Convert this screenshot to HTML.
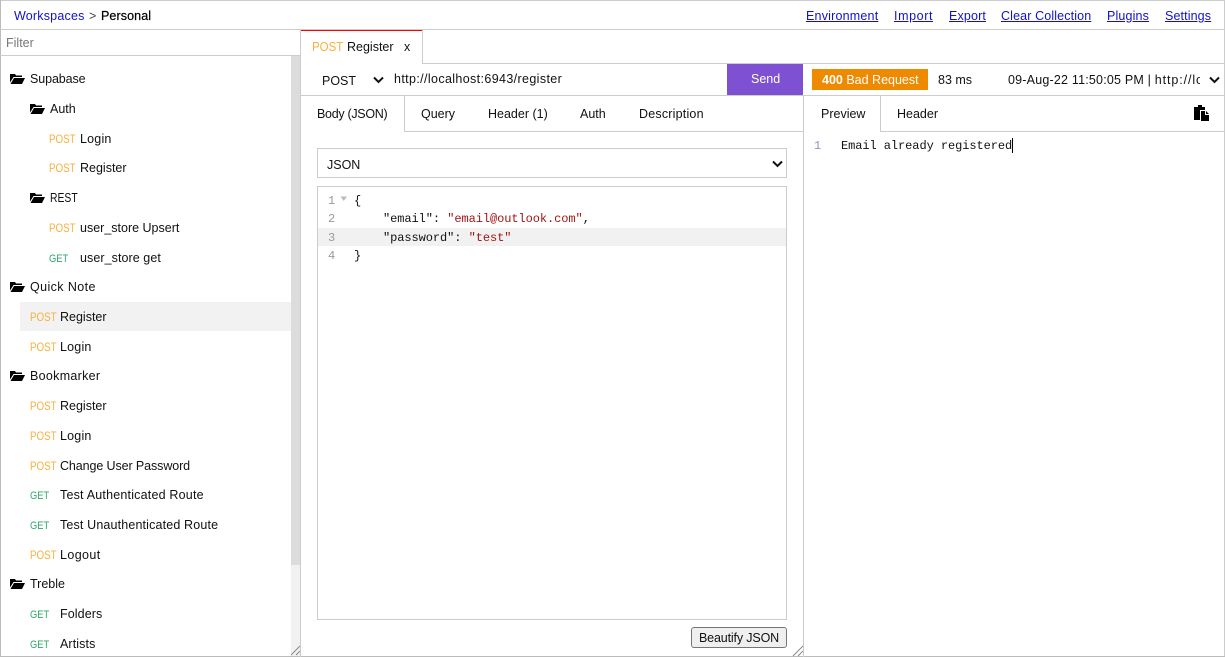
<!DOCTYPE html>
<html>
<head>
<meta charset="utf-8">
<style>
html,body{margin:0;padding:0;background:#fff}
body{width:1225px;height:657px;position:relative;overflow:hidden;font-family:"Liberation Sans",sans-serif;font-size:12.5px;color:#111}
.t,.m,.l{position:absolute;white-space:nowrap;line-height:16px;height:16px}
.m{font-family:"Liberation Mono",monospace;font-size:12px;line-height:18px;height:18px;letter-spacing:-.07px}
.l{color:#11c;text-decoration:underline;top:8px}
.r{position:absolute}
.p,.g{display:inline-block;transform-origin:0 50%}
.p{color:#fbaf3c;font-size:11.5px;transform:scaleX(.85)}
.g{color:#2fa96b;font-size:11px;transform:scaleX(.85)}
.n{color:#999}
.s{color:#a31515}
svg{position:absolute}
</style>
</head>
<body>
<!-- frame -->
<div class="r" style="left:0;top:0;width:1225px;height:1px;background:#ccc"></div>
<div class="r" style="left:0;top:0;width:1px;height:657px;background:#bbb"></div>
<div class="r" style="left:1224px;top:0;width:1px;height:657px;background:#ccc"></div>
<div class="r" style="left:0;top:656px;width:1225px;height:1px;background:#bbb"></div>
<div class="r" style="left:0;top:29px;width:1225px;height:1px;background:#ccc"></div>
<div class="r" style="left:0;top:55px;width:300px;height:1px;background:#ccc"></div>
<div class="r" style="left:300px;top:30px;width:1px;height:627px;background:#ccc"></div>
<div class="r" style="left:301px;top:63px;width:924px;height:1px;background:#ccc"></div>
<div class="r" style="left:301px;top:95px;width:924px;height:1px;background:#ccc"></div>
<div class="r" style="left:803px;top:96px;width:1px;height:561px;background:#ccc"></div>

<!-- top bar -->
<div class="t" style="left:14px;top:8px;color:#11c;letter-spacing:.2px">Workspaces</div>
<div class="t" style="left:89px;top:8px;color:#444">&gt;</div>
<div class="t" style="left:101px;top:8px;color:#000;letter-spacing:.1px;-webkit-text-stroke:.2px #000">Personal</div>
<a class="l" style="left:806px;letter-spacing:.2px">Environment</a>
<a class="l" style="left:894px;letter-spacing:.6px">Import</a>
<a class="l" style="left:949px;letter-spacing:.15px">Export</a>
<a class="l" style="left:1001px;letter-spacing:.13px">Clear Collection</a>
<a class="l" style="left:1107px;letter-spacing:.15px">Plugins</a>
<a class="l" style="left:1165px;letter-spacing:.12px">Settings</a>

<!-- filter -->
<div class="t" style="left:6px;top:35px;color:#777">Filter</div>

<!-- sidebar -->
<div class="r" style="left:291px;top:56px;width:9px;height:600px;background:#f1f1f1"></div>
<div class="r" style="left:291px;top:56px;width:9px;height:509px;background:#dcdcdc"></div>
<div class="r" style="left:20px;top:302px;width:271px;height:29px;background:#f2f2f2"></div>

<svg style="left:0;top:0" width="300" height="657">
<defs><path id="f" d="M0 1h5l1 1.5h6v1.5H3.500L0 9.500z M4 5h11l-3 6H0.500z" fill="#000"/></defs>
<use href="#f" x="10" y="73"/>
<use href="#f" x="30" y="103"/>
<use href="#f" x="30" y="192"/>
<use href="#f" x="10" y="281"/>
<use href="#f" x="10" y="370"/>
<use href="#f" x="10" y="578"/>
<g stroke="#888" stroke-width="1"><path d="M291 655l9-9M296 655l4-4"/></g>
</svg>

<div class="t" style="left:30px;top:71px;letter-spacing:-.1px">Supabase</div>
<div class="t" style="left:50px;top:101px">Auth</div>
<div class="t" style="left:49px;top:131px"><span class="p">POST</span></div><div class="t" style="left:80px;top:131px;letter-spacing:.2px">Login</div>
<div class="t" style="left:49px;top:160px"><span class="p">POST</span></div><div class="t" style="left:80px;top:160px">Register</div>
<div class="t" style="left:50px;top:190px;transform:scaleX(.83);transform-origin:0 50%">REST</div>
<div class="t" style="left:49px;top:220px"><span class="p">POST</span></div><div class="t" style="left:80px;top:220px">user_store Upsert</div>
<div class="t" style="left:49px;top:250px"><span class="g">GET</span></div><div class="t" style="left:80px;top:250px;letter-spacing:.07px">user_store get</div>
<div class="t" style="left:30px;top:279px;letter-spacing:.4px">Quick Note</div>
<div class="t" style="left:30px;top:309px"><span class="p">POST</span></div><div class="t" style="left:60px;top:309px">Register</div>
<div class="t" style="left:30px;top:339px"><span class="p">POST</span></div><div class="t" style="left:60px;top:339px;letter-spacing:.2px">Login</div>
<div class="t" style="left:30px;top:368px;letter-spacing:.3px">Bookmarker</div>
<div class="t" style="left:30px;top:398px"><span class="p">POST</span></div><div class="t" style="left:60px;top:398px">Register</div>
<div class="t" style="left:30px;top:428px"><span class="p">POST</span></div><div class="t" style="left:60px;top:428px;letter-spacing:.2px">Login</div>
<div class="t" style="left:30px;top:458px"><span class="p">POST</span></div><div class="t" style="left:60px;top:458px;letter-spacing:-.1px">Change User Password</div>
<div class="t" style="left:30px;top:487px"><span class="g">GET</span></div><div class="t" style="left:60px;top:487px;letter-spacing:.2px">Test Authenticated Route</div>
<div class="t" style="left:30px;top:517px"><span class="g">GET</span></div><div class="t" style="left:60px;top:517px;letter-spacing:.15px">Test Unauthenticated Route</div>
<div class="t" style="left:30px;top:547px"><span class="p">POST</span></div><div class="t" style="left:60px;top:547px;letter-spacing:.4px">Logout</div>
<div class="t" style="left:30px;top:576px">Treble</div>
<div class="t" style="left:30px;top:606px"><span class="g">GET</span></div><div class="t" style="left:60px;top:606px;letter-spacing:.1px">Folders</div>
<div class="t" style="left:30px;top:636px"><span class="g">GET</span></div><div class="t" style="left:60px;top:636px;letter-spacing:.1px">Artists</div>

<!-- request tab -->
<div class="r" style="left:301px;top:30px;width:121px;height:34px;background:#fff;border-top:1px solid #f00;box-sizing:border-box"></div>
<div class="r" style="left:422px;top:30px;width:1px;height:33px;background:#ccc"></div>
<div class="t" style="left:312px;top:39px;color:#fbaf3c;transform:scaleX(.92);transform-origin:0 50%">POST</div>
<div class="t" style="left:347px;top:39px">Register</div>
<div class="t" style="left:404px;top:39px">x</div>

<!-- url row -->
<div class="t" style="left:322px;top:73px">POST</div>
<svg style="left:373px;top:76px" width="11" height="8"><path d="M1 1.500l4.500 4.500L10 1.500" fill="none" stroke="#111" stroke-width="2"/></svg>
<div class="t" style="left:394px;top:71px;letter-spacing:.37px">http://localhost:6943/register</div>
<div class="r" style="left:727px;top:64px;width:76px;height:31px;background:#7e50d2"></div>
<div class="t" style="left:751px;top:71px;color:#fff">Send</div>

<!-- body tabs -->
<div class="r" style="left:404px;top:96px;width:1px;height:36px;background:#ccc"></div>
<div class="r" style="left:405px;top:131px;width:398px;height:1px;background:#ccc"></div>
<div class="t" style="left:317px;top:106px;letter-spacing:-.3px">Body (JSON)</div>
<div class="t" style="left:421px;top:106px">Query</div>
<div class="t" style="left:488px;top:106px">Header (1)</div>
<div class="t" style="left:580px;top:106px">Auth</div>
<div class="t" style="left:639px;top:106px;letter-spacing:.2px">Description</div>

<!-- select -->
<div class="r" style="left:317px;top:148px;width:470px;height:30px;border:1px solid #ccc;box-sizing:border-box"></div>
<div class="t" style="left:327px;top:157px">JSON</div>
<svg style="left:772px;top:160px" width="11" height="8"><path d="M1 1.500l4.500 4.500L10 1.500" fill="none" stroke="#111" stroke-width="2"/></svg>

<!-- editor -->
<div class="r" style="left:317px;top:186px;width:470px;height:434px;border:1px solid #ccc;box-sizing:border-box"></div>
<div class="r" style="left:318px;top:228px;width:468px;height:18px;background:#f1f1f1"></div>
<div class="m n" style="left:328px;top:192px">1</div>
<svg style="left:340px;top:196px" width="8" height="6"><path d="M0.500 0.500h6.500L3.750 5z" fill="#bbb"/></svg>
<div class="m n" style="left:328px;top:210px">2</div>
<div class="m n" style="left:328px;top:229px">3</div>
<div class="m n" style="left:328px;top:247px">4</div>
<div class="m" style="left:354px;top:192px">{</div>
<div class="m" style="left:383px;top:210px">"email": <span class="s">"email@outlook.com"</span>,</div>
<div class="m" style="left:383px;top:229px">"password": <span class="s">"test"</span></div>
<div class="m" style="left:354px;top:247px">}</div>

<!-- beautify -->
<div class="r" style="left:691px;top:627px;width:96px;height:21px;background:#efefef;border:1px solid #767676;border-radius:3px;box-sizing:border-box"></div>
<div class="t" style="left:699px;top:630px;letter-spacing:-.15px">Beautify JSON</div>
<svg style="left:790px;top:643px" width="14" height="14"><path d="M3 13l10-10M8 13l5-5" stroke="#888" stroke-width="1" fill="none"/></svg>

<!-- response -->
<div class="r" style="left:812px;top:69px;width:116px;height:21px;background:#ee8a00"></div>
<div class="t" style="left:822px;top:72px;color:#fff"><b>400</b> Bad Request</div>
<div class="t" style="left:938px;top:72px">83 ms</div>
<div class="r" style="left:1008px;top:72px;width:192px;height:16px;overflow:hidden"><div class="t" style="left:0;top:0;letter-spacing:.2px">09-Aug-22 11:50:05 PM | <span style="letter-spacing:.9px">http://localhost</span></div></div>
<svg style="left:1209px;top:76px" width="11" height="8"><path d="M1 1.500l4.500 4.500L10 1.500" fill="none" stroke="#111" stroke-width="2"/></svg>

<div class="r" style="left:880px;top:96px;width:1px;height:36px;background:#ccc"></div>
<div class="r" style="left:881px;top:131px;width:343px;height:1px;background:#ccc"></div>
<div class="t" style="left:821px;top:106px">Preview</div>
<div class="t" style="left:897px;top:106px">Header</div>
<svg style="left:1194px;top:105px" width="15" height="16"><path d="M0 2h4V0h4v2h3v3H6v10H0z M7 6h4v4h4v6H7z M12 6l3 3h-3z" fill="#000"/></svg>
<div class="m" style="left:814px;top:137px;color:#9a8fc0">1</div>
<div class="m" style="left:841px;top:137px">Email already registered</div>
<div class="r" style="left:1012px;top:138px;width:1px;height:15px;background:#000"></div>
</body>
</html>
